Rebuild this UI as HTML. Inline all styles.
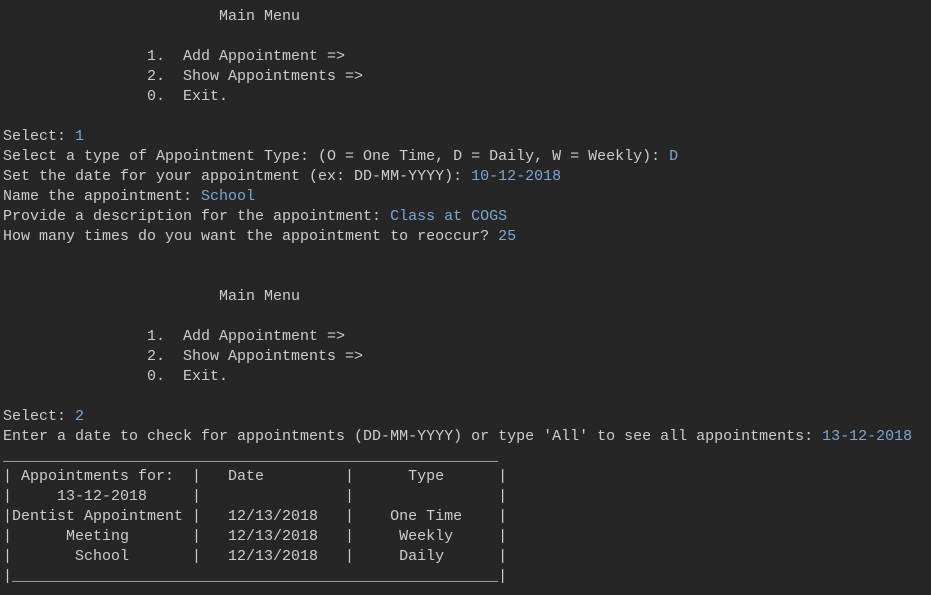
<!DOCTYPE html>
<html><head><meta charset="utf-8"><style>
html,body{margin:0;padding:0;background:#262626;width:931px;height:595px;overflow:hidden}
pre{margin:0;padding:7px 0 0 3px;font-family:"Liberation Mono",monospace;font-size:15px;line-height:20px;color:#cccccc;white-space:pre}
.b{color:#7aa6d6}
</style></head><body><pre>                        Main Menu

                1.  Add Appointment =>
                2.  Show Appointments =>
                0.  Exit.

Select: <span class="b">1</span>
Select a type of Appointment Type: (O = One Time, D = Daily, W = Weekly): <span class="b">D</span>
Set the date for your appointment (ex: DD-MM-YYYY): <span class="b">10-12-2018</span>
Name the appointment: <span class="b">School</span>
Provide a description for the appointment: <span class="b">Class at COGS</span>
How many times do you want the appointment to reoccur? <span class="b">25</span>


                        Main Menu

                1.  Add Appointment =>
                2.  Show Appointments =>
                0.  Exit.

Select: <span class="b">2</span>
Enter a date to check for appointments (DD-MM-YYYY) or type 'All' to see all appointments: <span class="b">13-12-2018</span>
_______________________________________________________
| Appointments for:  |   Date         |      Type      |
|     13-12-2018     |                |                |
|Dentist Appointment |   12/13/2018   |    One Time    |
|      Meeting       |   12/13/2018   |     Weekly     |
|       School       |   12/13/2018   |     Daily      |
|______________________________________________________|</pre></body></html>
